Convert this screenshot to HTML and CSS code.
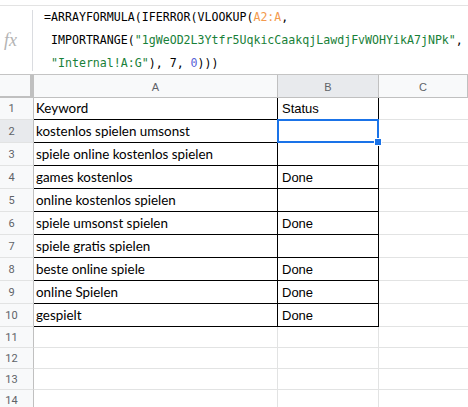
FILE: index.html
```html
<!DOCTYPE html>
<html lang="de">
<head>
<meta charset="utf-8">
<title>Keywords</title>
<link rel="stylesheet" href="styles.css">
</head>
<body>
<div class="formula-bar">
  <div class="fx">fx</div>
  <div class="formula">
    <div class="line">=ARRAYFORMULA(IFERROR(VLOOKUP(<span class="range">A2:A</span>,</div>
    <div class="line"> IMPORTRANGE(<span class="str">"1gWeOD2L3Ytfr5UqkicCaakqjLawdjFvWOHYikA7jNPk"</span>,</div>
    <div class="line"> <span class="str">"Internal!A:G"</span>), 7, <span class="num">0</span>)))</div>
  </div>
</div>

<div class="sheet">
  <div class="row head">
    <div class="corner"></div>
    <div class="col-head">A</div>
    <div class="col-head selected">B</div>
    <div class="col-head">C</div>
  </div>

  <div class="row data first">
    <div class="row-num">1</div>
    <div class="cell a">Keyword</div>
    <div class="cell b">Status</div>
    <div class="cell c"></div>
  </div>
  <div class="row data">
    <div class="row-num selected">2</div>
    <div class="cell a">kostenlos spielen umsonst</div>
    <div class="cell b active"><span class="handle"></span></div>
    <div class="cell c"></div>
  </div>
  <div class="row data">
    <div class="row-num">3</div>
    <div class="cell a">spiele online kostenlos spielen</div>
    <div class="cell b"></div>
    <div class="cell c"></div>
  </div>
  <div class="row data">
    <div class="row-num">4</div>
    <div class="cell a">games kostenlos</div>
    <div class="cell b">Done</div>
    <div class="cell c"></div>
  </div>
  <div class="row data">
    <div class="row-num">5</div>
    <div class="cell a">online kostenlos spielen</div>
    <div class="cell b"></div>
    <div class="cell c"></div>
  </div>
  <div class="row data">
    <div class="row-num">6</div>
    <div class="cell a">spiele umsonst spielen</div>
    <div class="cell b">Done</div>
    <div class="cell c"></div>
  </div>
  <div class="row data">
    <div class="row-num">7</div>
    <div class="cell a">spiele gratis spielen</div>
    <div class="cell b"></div>
    <div class="cell c"></div>
  </div>
  <div class="row data">
    <div class="row-num">8</div>
    <div class="cell a">beste online spiele</div>
    <div class="cell b">Done</div>
    <div class="cell c"></div>
  </div>
  <div class="row data">
    <div class="row-num">9</div>
    <div class="cell a">online Spielen</div>
    <div class="cell b">Done</div>
    <div class="cell c"></div>
  </div>
  <div class="row data">
    <div class="row-num">10</div>
    <div class="cell a">gespielt</div>
    <div class="cell b">Done</div>
    <div class="cell c"></div>
  </div>

  <div class="row blank">
    <div class="row-num">11</div>
    <div class="cell"></div>
    <div class="cell"></div>
    <div class="cell c"></div>
  </div>
  <div class="row blank">
    <div class="row-num">12</div>
    <div class="cell"></div>
    <div class="cell"></div>
    <div class="cell c"></div>
  </div>
  <div class="row blank">
    <div class="row-num">13</div>
    <div class="cell"></div>
    <div class="cell"></div>
    <div class="cell c"></div>
  </div>
  <div class="row blank">
    <div class="row-num">14</div>
    <div class="cell"></div>
    <div class="cell"></div>
    <div class="cell c"></div>
  </div>
</div>
</body>
</html>
```

FILE: styles.css
```css
* {
  box-sizing: border-box;
}

html, body {
  margin: 0;
  padding: 0;
  background: #fff;
  overflow: hidden;
}

body {
  font-family: "Liberation Sans", Arial, sans-serif;
  color: #000;
}

/* ---------- formula bar ---------- */
.formula-bar {
  margin-top: 5px;
  height: 70px;
  display: flex;
  border-top: 1px solid #e3e3e3;
  border-bottom: 1px solid #c4c4c4;
}

.fx {
  width: 33px;
  margin: 4px 0 3px;
  padding-right: 11px;
  border-right: 1px solid #dadce0;
  display: flex;
  align-items: center;
  justify-content: center;
  font-family: "Liberation Serif", serif;
  font-style: italic;
  font-size: 18px;
  color: #b3b3b3;
}

.formula {
  margin-left: 11px;
  font-family: "DejaVu Sans Mono", monospace;
  font-size: 11.6px;
  line-height: 22.8px;
  color: #000;
}

.line {
  white-space: pre;
}

.range {
  color: #f39a4e;
}

.str {
  color: #188038;
}

.num {
  color: #5763d6;
}

/* ---------- grid ---------- */
.row {
  display: grid;
  grid-template-columns: 34px 244px 101px 1fr;
  height: 23px;
}

.row.head {
  height: 23px;
}

.row.first {
  height: 22px;
}

.row.blank {
  height: 21px;
}

.corner {
  background: #f8f9fa;
  border-right: 4px solid #c0c0c0;
  border-bottom: 2px solid #c0c0c0;
}

.col-head {
  background: #f8f9fa;
  border-right: 1px solid #c0c0c0;
  border-bottom: 1px solid #c0c0c0;
  display: flex;
  align-items: center;
  justify-content: center;
  font-size: 11px;
  color: #5f6368;
  padding-top: 1px;
}

.col-head.selected,
.row-num.selected {
  background: #e8eaed;
}

.row-num {
  background: #f8f9fa;
  border-right: 1px solid #c0c0c0;
  border-bottom: 1px solid #e2e3e3;
  display: flex;
  align-items: center;
  justify-content: center;
  padding-right: 10px;
  font-family: Roboto, "Liberation Sans", sans-serif;
  font-size: 11px;
  color: #5f6368;
}

.cell {
  border-right: 1px solid #e2e3e3;
  border-bottom: 1px solid #e2e3e3;
  display: flex;
  align-items: flex-end;
  padding: 0 3px 3px;
  white-space: nowrap;
  overflow: hidden;
}

.data .a,
.data .b {
  border-right: 1px solid #000;
  border-bottom: 1px solid #000;
}

.data .c {
  border-right: none;
}

.cell.a {
  font-family: Lato, "Liberation Sans", sans-serif;
  font-size: 13.4px;
  line-height: 16px;
  padding-left: 2px;
}

.cell.b {
  font-size: 13px;
  line-height: 15px;
  padding-left: 4px;
}

.cell.c {
  border-right: none;
}

/* active cell with its fill handle */
.cell.active {
  position: relative;
  overflow: visible;
}

.cell.active::after {
  content: "";
  position: absolute;
  top: -1px;
  left: -1px;
  right: -1px;
  bottom: -1px;
  border: 2px solid #1a73e8;
}

.handle {
  position: absolute;
  right: -4px;
  bottom: -4px;
  width: 8px;
  height: 8px;
  background: #1a73e8;
  border: 1px solid #fff;
  z-index: 1;
}
```
